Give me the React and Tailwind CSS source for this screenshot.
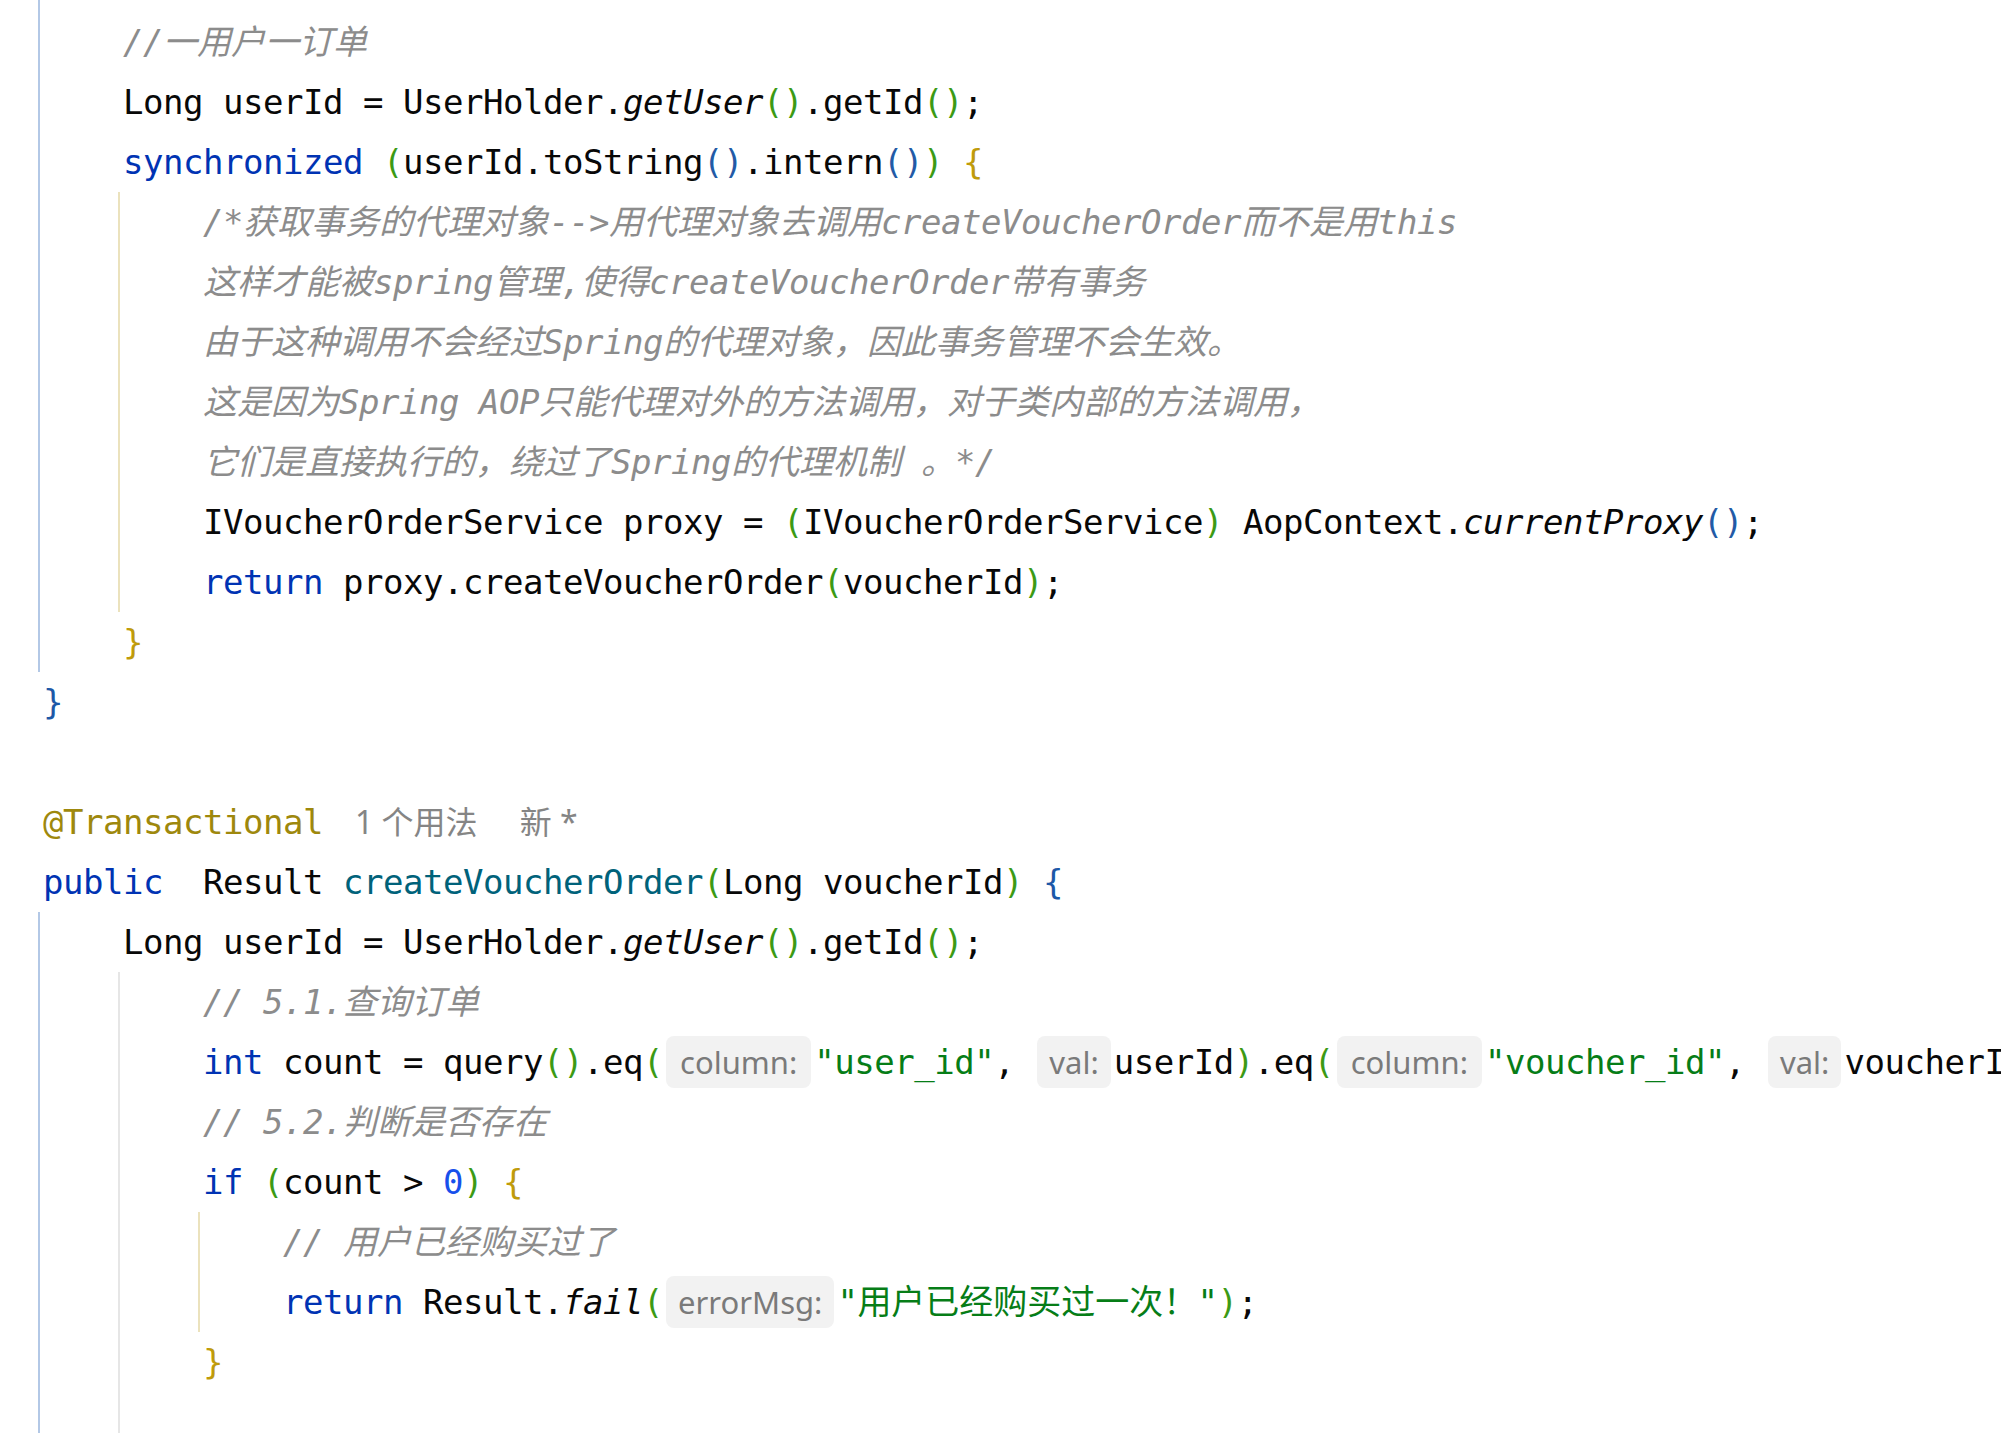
import React from "react";

const CJK = /([\u3000-\u303f\u4e00-\u9fff\uff00-\uffef]+)/;

const C = {
  d: "",
  k: "text-[#0033b3]",
  c: "text-[#8c8c8c] italic",
  s: "text-[#067d17]",
  p: "text-[#3c9a15]",
  b: "text-[#235aa6]",
  g: "text-[#bf9b0b]",
  B: "text-[#1d58a7]",
  i: "italic",
  m: "text-[#00627a]",
  n: "text-[#1750eb]",
  a: "text-[#9e880d]",
};

function Txt({ text }) {
  const parts = text.split(CJK);
  return parts.map((p, i) =>
    i % 2 === 1 ? (
      <span key={i} className="tracking-normal">
        {p}
      </span>
    ) : (
      <React.Fragment key={i}>{p}</React.Fragment>
    )
  );
}

function Inlay({ label }) {
  const wide = label === "column:";
  return (
    <span
      className={`mx-[3px] inline-flex h-[52px] items-center rounded-[8px] bg-[#f2f2f2] font-['Noto_Sans',sans-serif] text-[31px] not-italic tracking-normal text-[#7a7a7a] ${
        wide ? "px-[14px]" : "px-[12px]"
      }`}
    >
      {label}
    </span>
  );
}

function Line({ segs = [], pad = "pl-[83px]", extra }) {
  return (
    <div className={`h-[60px] whitespace-pre leading-[60px] ${pad}`}>
      {segs.map((s, i) =>
        s.inlay ? (
          <Inlay key={i} label={s.inlay} />
        ) : (
          <span key={i} className={C[s[0]]}>
            <Txt text={s[1]} />
          </span>
        )
      )}
      {extra}
    </div>
  );
}

const getUserLine = [
  ["d", "Long userId = UserHolder."],
  ["i", "getUser"],
  ["p", "()"],
  ["d", ".getId"],
  ["p", "()"],
  ["d", ";"],
];

export default function App() {
  return (
    <div className="h-screen w-full overflow-hidden bg-white font-['DejaVu_Sans_Mono','Noto_Sans_CJK_SC',monospace] text-[34px] tracking-[-0.47px] text-[#080808]">
      {/* Block A */}
      <div className="ml-[38px] border-l-2 border-[#b3c8e6] pt-[12px]">
        <Line segs={[["c", "//一用户一订单"]]} />
        <Line segs={getUserLine} />
        <Line
          segs={[
            ["k", "synchronized"],
            ["d", " "],
            ["p", "("],
            ["d", "userId.toString"],
            ["b", "()"],
            ["d", ".intern"],
            ["b", "()"],
            ["p", ")"],
            ["d", " "],
            ["g", "{"],
          ]}
        />
        <div className="ml-[78px] border-l-2 border-[#ebe2bd]">
          <Line segs={[["c", "/*获取事务的代理对象-->用代理对象去调用createVoucherOrder而不是用this"]]} />
          <Line segs={[["c", "这样才能被spring管理,使得createVoucherOrder带有事务"]]} />
          <Line segs={[["c", "由于这种调用不会经过Spring的代理对象，因此事务管理不会生效。"]]} />
          <Line segs={[["c", "这是因为Spring AOP只能代理对外的方法调用，对于类内部的方法调用，"]]} />
          <Line segs={[["c", "它们是直接执行的，绕过了Spring的代理机制 。*/"]]} />
          <Line
            segs={[
              ["d", "IVoucherOrderService proxy = "],
              ["p", "("],
              ["d", "IVoucherOrderService"],
              ["p", ")"],
              ["d", " AopContext."],
              ["i", "currentProxy"],
              ["b", "()"],
              ["d", ";"],
            ]}
          />
          <Line
            segs={[
              ["k", "return"],
              ["d", " proxy.createVoucherOrder"],
              ["p", "("],
              ["d", "voucherId"],
              ["p", ")"],
              ["d", ";"],
            ]}
          />
        </div>
        <Line segs={[["g", "}"]]} />
      </div>

      <Line pad="pl-[43px]" segs={[["B", "}"]]} />
      <Line pad="pl-[43px]" />
      <Line
        pad="pl-[43px]"
        segs={[["a", "@Transactional"]]}
        extra={
          <>
            <span className="ml-[32px] font-['Noto_Sans','Noto_Sans_CJK_SC',sans-serif] text-[32px] tracking-normal text-[#858585]">
              1 个用法
            </span>
            <span className="ml-[42px] font-['Noto_Sans','Noto_Sans_CJK_SC',sans-serif] text-[32px] tracking-normal text-[#858585]">
              新 *
            </span>
          </>
        }
      />
      <Line
        pad="pl-[43px]"
        segs={[
          ["k", "public"],
          ["d", "  Result "],
          ["m", "createVoucherOrder"],
          ["p", "("],
          ["d", "Long voucherId"],
          ["p", ")"],
          ["d", " "],
          ["B", "{"],
        ]}
      />

      {/* Block C */}
      <div className="ml-[38px] border-l-2 border-[#b3c8e6]">
        <Line segs={getUserLine} />
        <div className="ml-[78px] border-l-2 border-[#e6e6e6]">
          <Line segs={[["c", "// 5.1.查询订单"]]} />
          <Line
            segs={[
              ["k", "int"],
              ["d", " count = query"],
              ["p", "()"],
              ["d", ".eq"],
              ["p", "("],
              { inlay: "column:" },
              ["s", "\"user_id\""],
              ["d", ", "],
              { inlay: "val:" },
              ["d", "userId"],
              ["p", ")"],
              ["d", ".eq"],
              ["p", "("],
              { inlay: "column:" },
              ["s", "\"voucher_id\""],
              ["d", ", "],
              { inlay: "val:" },
              ["d", "voucherId"],
              ["p", ")"],
              ["d", ".count"],
              ["b", "()"],
              ["d", ";"],
            ]}
          />
          <Line segs={[["c", "// 5.2.判断是否存在"]]} />
          <Line
            segs={[
              ["k", "if"],
              ["d", " "],
              ["p", "("],
              ["d", "count > "],
              ["n", "0"],
              ["p", ")"],
              ["d", " "],
              ["g", "{"],
            ]}
          />
          <div className="ml-[78px] border-l-2 border-[#ebe2bd]">
            <Line segs={[["c", "// 用户已经购买过了"]]} />
            <Line
              segs={[
                ["k", "return"],
                ["d", " Result."],
                ["i", "fail"],
                ["p", "("],
                { inlay: "errorMsg:" },
                ["s", "\"用户已经购买过一次！\""],
                ["p", ")"],
                ["d", ";"],
              ]}
            />
          </div>
          <Line segs={[["g", "}"]]} />
          <Line />
          <Line />
        </div>
      </div>
    </div>
  );
}
